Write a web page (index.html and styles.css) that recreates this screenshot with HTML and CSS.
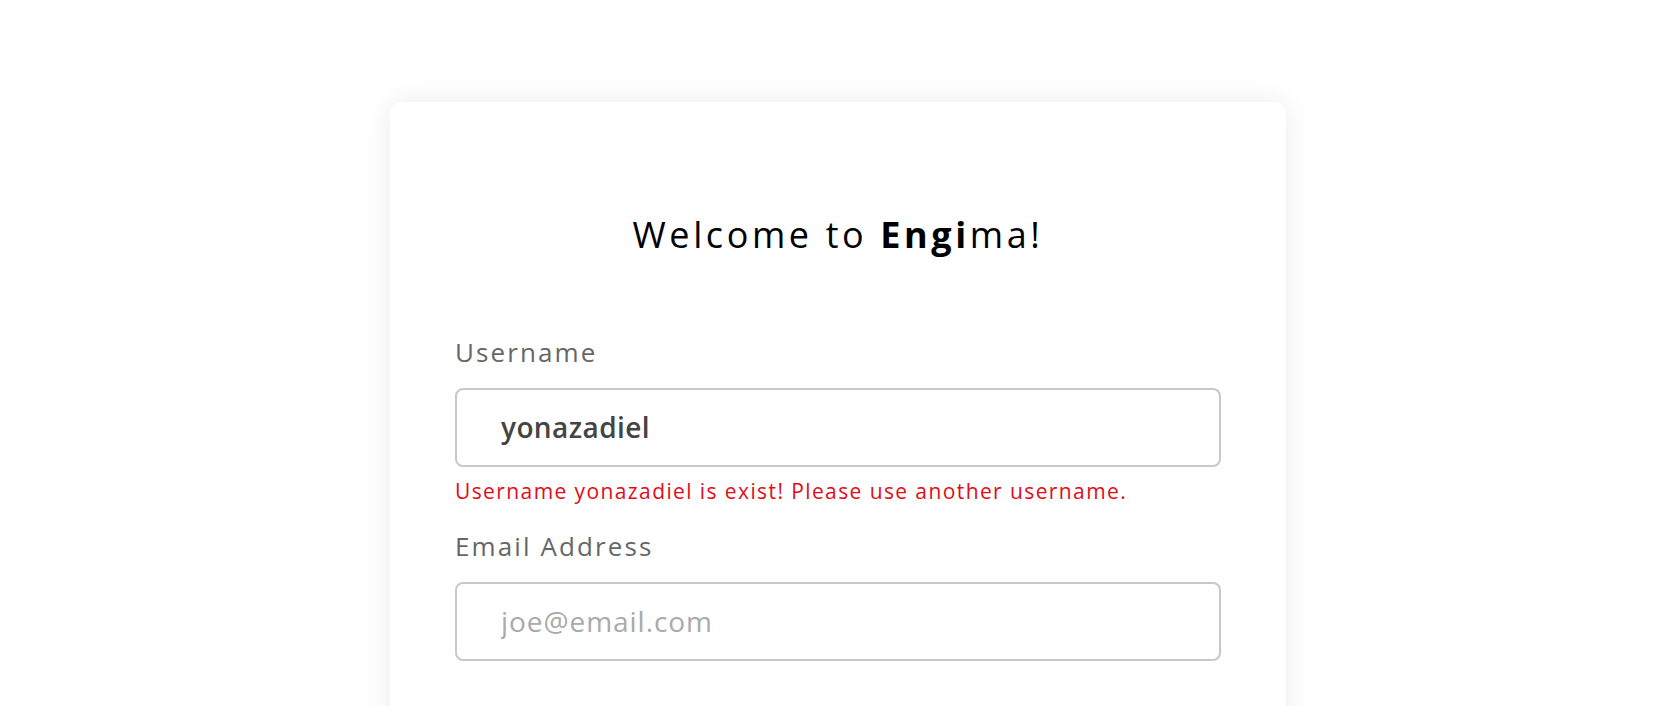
FILE: index.html
```html
<!DOCTYPE html>
<html lang="en">
<head>
<meta charset="utf-8">
<title>Engima - Sign up</title>
<link rel="stylesheet" href="styles.css">
</head>
<body>
<main class="page">
  <section class="card">
    <h1 class="title">Welcome to <strong>Engi</strong>ma!</h1>
    <form class="form">
      <label class="label" for="username">Username</label>
      <input class="field field-filled" id="username" type="text" value="yonazadiel">
      <p class="error">Username yonazadiel is exist! Please use another username.</p>
      <label class="label label-next" for="email">Email Address</label>
      <input class="field" id="email" type="email" placeholder="joe@email.com">
    </form>
  </section>
</main>
</body>
</html>
```

FILE: styles.css
```css
html, body {
  margin: 0;
  padding: 0;
  background: #ffffff;
  overflow: hidden;
}

body {
  font-family: "Open Sans", "Liberation Sans", sans-serif;
  color: #000;
}

.page {
  display: flex;
  justify-content: center;
  padding-top: 102px;
}

.card {
  width: 896px;
  box-sizing: border-box;
  padding: 112px 65px 200px;
  background: #fff;
  border-radius: 12px;
  box-shadow: 0 0 28px rgba(0, 0, 0, 0.08);
}

.title {
  margin: 0;
  text-align: center;
  font-size: 36px;
  line-height: 42px;
  font-weight: 500;
  letter-spacing: 3.6px;
}

.title strong {
  font-weight: 700;
}

.form {
  display: flex;
  flex-direction: column;
  margin-top: 80px;
}

.label {
  font-size: 26px;
  line-height: 32px;
  font-weight: 500;
  color: #666;
  letter-spacing: 2.1px;
}

.label-next {
  margin-top: 26px;
}

.field {
  margin-top: 20px;
  height: 79px;
  box-sizing: border-box;
  border: 2px solid #c8c8c8;
  border-radius: 8px;
  padding: 0 44px 2px;
  font-family: "Open Sans", "Liberation Sans", sans-serif;
  font-size: 28px;
  font-weight: 500;
  color: #444;
  outline: none;
  background: #fff;
  letter-spacing: 0.4px;
}

.field-filled {
  font-weight: 600;
}

.field::placeholder {
  color: #aaa;
  opacity: 1;
  letter-spacing: 0.95px;
}

.error {
  margin: 11px 0 0;
  font-size: 21px;
  line-height: 26px;
  font-weight: 500;
  color: #e30b17;
  letter-spacing: 1.4px;
}
```
